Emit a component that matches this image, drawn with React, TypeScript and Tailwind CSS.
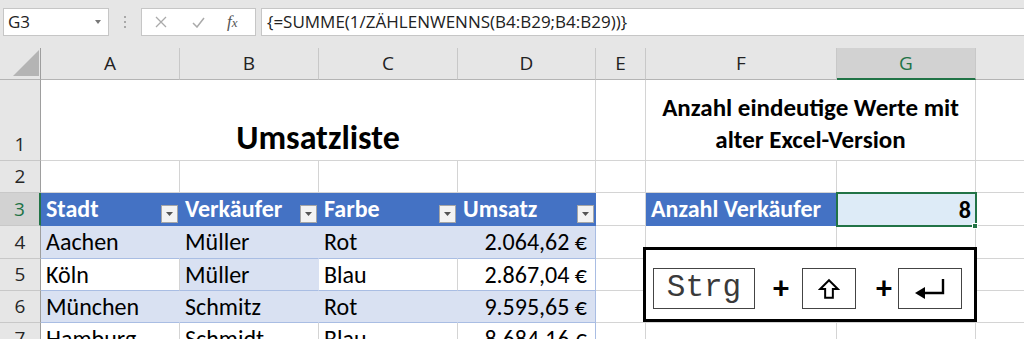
import React from "react";

const cellFont = { fontFamily: "Carlito, Lato, 'Noto Sans', sans-serif" };
const uiFont = { fontFamily: "'Open Sans', 'Noto Sans', sans-serif" };

const data = [
  ["Aachen", "Müller", "Rot", "2.064,62 €"],
  ["Köln", "Müller", "Blau", "2.867,04 €"],
  ["München", "Schmitz", "Rot", "9.595,65 €"],
  ["Hamburg", "Schmidt", "Blau", "8.684,16 €"],
];

// H is off screen, its label is not visible
const letters = ["A", "B", "C", "D", "E", "F", "G", ""];
const headers = ["Stadt", "Verkäufer", "Farbe", "Umsatz"];

function FilterButton() {
  return (
    <div className="absolute right-[2px] bottom-[2px] flex h-[18px] w-[17px] items-center justify-center border border-[#a6a6a6] bg-[#f3f3f3]">
      <svg width="7" height="4" viewBox="0 0 7 4">
        <polygon points="0,0 7,0 3.5,4" fill="#555" />
      </svg>
    </div>
  );
}

function RowHead({ n, active }: { n: number; active?: boolean }) {
  return (
    <div
      style={uiFont}
      className={
        "flex items-end justify-center border-b border-[#c8c8c8] pb-[3px] text-[19px] leading-[26px] " +
        (active
          ? "border-r-2 border-r-[#217346] bg-[#d2d2d2] text-[#217346]"
          : "border-r border-r-[#9e9e9e] bg-[#e6e6e6] text-[#262626]")
      }
    >
      {n}
    </div>
  );
}

function Grid({ className = "" }: { className?: string }) {
  return <div className={"border-r border-b border-[#d4d4d4] bg-white " + className} />;
}

export default function App() {
  return (
    <div className="relative h-[339px] w-[1024px] overflow-hidden bg-white">
      {/* formula bar */}
      <div className="flex h-[48px] items-start bg-[#e6e6e6] pt-[8px]" style={uiFont}>
        <div className="ml-[3px] flex h-[28px] w-[106px] items-center justify-between border border-[#c6c6c6] bg-white pl-[4px] pr-[7px] text-[17px] text-[#222]">
          <span>G3</span>
          <svg width="6" height="4" viewBox="0 0 6 4">
            <polygon points="0,0 6,0 3,4" fill="#777" />
          </svg>
        </div>
        <div className="ml-[15px] mt-[8px] flex flex-col gap-[3px]">
          <span className="h-[2px] w-[2px] bg-[#a8a8a8]" />
          <span className="h-[2px] w-[2px] bg-[#a8a8a8]" />
          <span className="h-[2px] w-[2px] bg-[#a8a8a8]" />
        </div>
        <div className="ml-[15px] flex h-[28px] w-[115px] items-center border border-[#c6c6c6] bg-white">
          <svg className="ml-[13px]" width="12" height="12" viewBox="0 0 12 12">
            <path d="M1 1 L11 11 M11 1 L1 11" stroke="#aaa" strokeWidth="1.3" />
          </svg>
          <svg className="ml-[25px]" width="13" height="11" viewBox="0 0 13 11">
            <path d="M1 6 L5 10 L12 1" stroke="#aaa" strokeWidth="1.5" fill="none" />
          </svg>
          <span
            className="ml-[22px] text-[17px] italic text-[#555]"
            style={{ fontFamily: "'Liberation Serif', serif" }}
          >
            f<span className="text-[13px]">x</span>
          </span>
        </div>
        <div className="ml-[5px] flex h-[28px] flex-1 items-center border border-r-0 border-[#c6c6c6] bg-white pl-[5px] text-[17px] text-[#222]">
          {"{=SUMME(1/ZÄHLENWENNS(B4:B29;B4:B29))}"}
        </div>
      </div>

      {/* sheet */}
      <div
        className="grid w-[1115px] grid-cols-[41px_139px_139px_139px_138px_50px_191px_139px_139px] grid-rows-[32px_81px_32px_33px_33px_32px_32px_32px]"
        style={cellFont}
      >
        {/* column headers */}
        <div className="relative border-r border-b border-r-[#9e9e9e] border-b-[#b4b4b4] bg-[#e6e6e6]">
          <svg className="absolute left-0 top-0" width="41" height="32" viewBox="0 0 41 32">
            <polygon points="13,28 39,2 39,28" fill="#b4b4b4" />
          </svg>
        </div>
        {letters.map((l, i) =>
          l === "G" ? (
            <div
              key={i}
              style={uiFont}
              className="flex items-center justify-center border-r border-b-2 border-r-[#c8c8c8] border-b-[#217346] bg-[#d2d2d2] text-[19px] text-[#217346]"
            >
              {l}
            </div>
          ) : (
            <div
              key={i}
              style={uiFont}
              className="flex items-center justify-center border-r border-b border-r-[#c8c8c8] border-b-[#b4b4b4] bg-[#e6e6e6] text-[19px] text-[#222]"
            >
              {l}
            </div>
          )
        )}

        {/* row 1 */}
        <RowHead n={1} />
        <div className="col-span-4 flex items-end justify-center border-r border-b border-[#d4d4d4] pb-[1px] text-[34px] font-bold leading-[42px] text-black">
          Umsatzliste
        </div>
        <Grid />
        <div className="col-span-2 flex items-center justify-center border-r border-b border-[#d4d4d4] pt-[8px] text-center text-[25px] font-bold leading-[32px] text-black">
          Anzahl eindeutige Werte mit
          <br />
          alter Excel-Version
        </div>
        <Grid />

        {/* row 2 */}
        <RowHead n={2} />
        {letters.map((_, i) => (
          <Grid key={i} />
        ))}

        {/* row 3 */}
        <RowHead n={3} active />
        {headers.map((h) => (
          <div
            key={h}
            className="relative flex items-center border-b border-[#4472c4] bg-[#4472c4] pl-[5px] text-[24px] font-bold text-white"
          >
            {h}
            <FilterButton />
          </div>
        ))}
        <Grid />
        <div className="flex items-center border-b border-[#4472c4] bg-[#4472c4] pl-[5px] text-[24px] font-bold text-white">
          Anzahl Verkäufer
        </div>
        <div className="relative flex items-center justify-end bg-[#ddebf7] pr-[5px] text-[24px] font-bold text-black">
          <div className="absolute -left-[1px] -top-[1px] h-[35px] w-[141px] border-2 border-[#217346]" />
          <div className="absolute -bottom-[3px] -right-[2px] h-[6px] w-[6px] border border-white bg-[#217346]" />
          8
        </div>
        <Grid />

        {/* rows 4-7 */}
        {data.map((row, r) => (
          <React.Fragment key={r}>
            <RowHead n={r + 4} />
            {row.map((v, c) => {
              const blue = r % 2 === 0 || (r === 1 && c === 1);
              return (
                <div
                  key={c}
                  className={
                    "flex items-center whitespace-nowrap border-b border-b-[#a9bde3] text-[24px] text-black " +
                    (c === 3 ? "justify-end border-r border-r-[#a9bde3] pr-[8px] " : "pl-[5px] ") +
                    (blue
                      ? "bg-[#d9e1f2] " + (c === 3 ? "" : "border-r border-r-[#d9e1f2]")
                      : "bg-white " + (c === 3 ? "" : "border-r border-r-[#d4d4d4]"))
                  }
                >
                  {v}
                </div>
              );
            })}
            <Grid />
            <Grid />
            <Grid />
            <Grid />
          </React.Fragment>
        ))}
      </div>

      {/* keyboard shortcut picture */}
      <div className="absolute left-[643px] top-[247px] flex h-[75px] w-[334px] items-start border-[3px] border-black bg-white pt-[18px]">
        <div
          className="ml-[7px] flex h-[41px] w-[102px] items-center justify-center border-[1.5px] border-[#444] text-[31px] text-[#3a3a3a]"
          style={{ fontFamily: "'Liberation Mono', 'DejaVu Sans Mono', monospace" }}
        >
          Strg
        </div>
        <span className="ml-[18px] text-[32px] font-bold leading-[41px] text-black" style={cellFont}>
          +
        </span>
        <div className="ml-[13px] flex h-[41px] w-[54px] items-center justify-center border-[1.5px] border-[#444]">
          <svg width="22" height="22" viewBox="0 0 20 20">
            <path
              d="M10 2 L18 10 L13.5 10 L13.5 18 L6.5 18 L6.5 10 L2 10 Z"
              fill="none"
              stroke="#000"
              strokeWidth="1.8"
              strokeLinejoin="miter"
            />
          </svg>
        </div>
        <span className="ml-[20px] text-[32px] font-bold leading-[41px] text-black" style={cellFont}>
          +
        </span>
        <div className="ml-[6px] flex h-[41px] w-[64px] items-center justify-center border-[1.5px] border-[#444]">
          <svg width="32" height="22" viewBox="0 0 32 22">
            <path d="M29 1 L29 15 L10 15" fill="none" stroke="#000" strokeWidth="2.4" />
            <polygon points="1,15 11,9 11,21" fill="#000" />
          </svg>
        </div>
      </div>
    </div>
  );
}
